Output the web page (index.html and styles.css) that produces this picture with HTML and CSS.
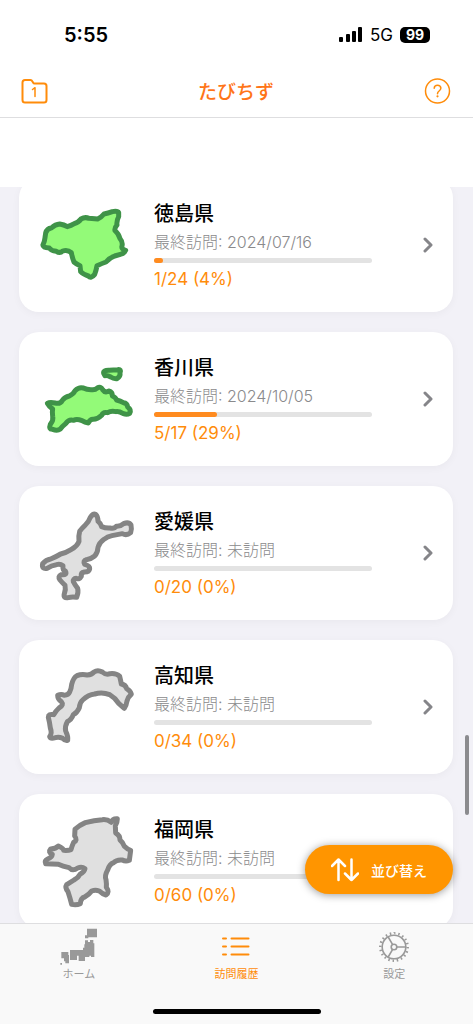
FILE: index.html
```html
<!DOCTYPE html>
<html lang="ja">
<head>
  <meta charset="UTF-8" />
  <meta name="viewport" content="width=device-width, initial-scale=1.0" />
  <title>たびちず</title>
  <link rel="stylesheet" href="styles.css">
</head>
<body>
  <div class="app">
    <div class="status-bar">
      <span class="time">5:55</span>
      <div class="status-icons">
        <svg class="signal" viewBox="0 0 24 16">
          <rect x="0" y="10" width="4" height="5" rx="1" />
          <rect x="7" y="7" width="4" height="8" rx="1" />
          <rect x="13" y="4" width="4" height="11" rx="1" />
          <rect x="19" y="0" width="4" height="15" rx="1" />
        </svg>
        <span class="network">5G</span>
        <span class="battery">99</span>
      </div>
    </div>

    <header class="nav">
      <button class="icon-btn" aria-label="フォルダ 1">
        <svg width="27" height="26" viewBox="0 0 27 26">
          <path d="M4 2h5.500q1.200 0 1.800 1.200l.9 1.600q.4.700 1.300.7H23q2.500 0 2.500 2.500v14q0 2.500-2.500 2.500H4q-2.500 0-2.500-2.500V4.500Q1.500 2 4 2z" />
          <path class="thin" d="M11.500 11.500l2.500-1.800v8.800" />
        </svg>
      </button>
      <h1>たびちず</h1>
      <button class="icon-btn" aria-label="ヘルプ">
        <svg width="27" height="26" viewBox="0 0 27 26">
          <circle class="thin" cx="13.500" cy="13" r="12" />
          <path class="thin" d="M10.200 10.200q.2-3 3.300-3t3.400 2.900q0 1.600-1.800 2.900-1.600 1.200-1.600 2.800" />
          <circle class="dot" cx="13.500" cy="18.300" r="1.100" />
        </svg>
      </button>
    </header>

    <div class="banner"></div>

    <main class="content">
      <ul class="pref-list">
        <li>
          <button class="card">
            <svg class="map visited" viewBox="51 15 300 300">
              <path d="M77 129Q81 115 94 114Q106 103 119 102Q132 104 142 110Q153 107 163 101Q177 96 183 87Q195 80 207 85L233 87Q244 82 252 72Q264 70 277 65Q293 62 296 68V80Q289 93 291 105Q283 113 285 122Q296 131 300 146Q309 156 306 168Q303 177 317 181Q314 190 301 193L284 198Q268 204 258 216Q246 220 231 227Q229 240 224 253Q213 267 205 258Q189 253 182 245L180 227Q169 222 162 216Q157 204 154 188Q143 178 128 183Q120 191 109 184Q93 182 88 174Q67 173 69 164Q74 153 75 143Z" />
            </svg>
            <div class="info">
              <h2>徳島県</h2>
              <p class="date">最終訪問: 2024/07/16</p>
              <div class="bar"><div class="fill" style="width: 4%"></div></div>
              <p class="count">1/24 (4%)</p>
            </div>
            <svg class="chevron" viewBox="0 0 10 16"><path d="M2 2l6 6-6 6" /></svg>
          </button>
        </li>
        <li>
          <button class="card">
            <svg class="map visited" viewBox="51 -3 300 300">
              <path d="M251 70Q249 60 268 61L293 59Q305 57 300 69Q302 79 291 86Q281 87 272 81Q263 76 255 77Z" />
              <path d="M82 160Q90 155 105 159Q121 163 127 151Q134 141 148 138Q161 132 165 122Q177 110 190 114Q200 119 213 119Q225 121 232 114Q242 108 248 119Q256 130 266 123Q278 126 277 138Q287 142 290 150Q301 153 310 158Q322 159 323 171Q335 179 329 190Q321 195 310 191Q296 183 288 185Q272 182 263 188Q249 185 245 196Q233 208 220 208Q211 207 205 219Q195 218 186 212Q170 206 161 211Q146 207 137 221Q127 229 121 237Q112 244 98 238Q85 239 91 223Q101 211 98 199Q96 186 98 177Q88 171 82 160Z" />
            </svg>
            <div class="info">
              <h2>香川県</h2>
              <p class="date">最終訪問: 2024/10/05</p>
              <div class="bar"><div class="fill" style="width: 29%"></div></div>
              <p class="count">5/17 (29%)</p>
            </div>
            <svg class="chevron" viewBox="0 0 10 16"><path d="M2 2l6 6-6 6" /></svg>
          </button>
        </li>
        <li>
          <button class="card">
            <svg class="map" viewBox="51 9 300 300">
              <path d="M211 52Q219 40 227 43Q234 49 234 64Q242 70 245 80Q257 85 270 84Q283 87 289 79Q301 80 311 71Q326 65 333 75Q336 88 332 98Q320 108 307 101L276 107Q262 110 252 118Q238 128 234 142Q233 159 224 168Q212 178 199 179Q188 182 194 193Q210 197 209 206Q208 216 193 216Q182 218 184 229Q178 240 169 235Q158 236 160 245Q165 255 173 265Q176 276 170 292Q155 290 145 293Q129 296 133 281Q138 269 135 256Q125 246 120 240Q112 229 124 224Q143 226 136 213Q127 211 129 197Q121 191 109 194Q94 196 82 205Q64 209 68 191Q78 179 92 177Q109 170 122 162Q139 158 153 149Q172 138 177 124Q175 108 179 94Q188 82 195 76Q206 67 211 52Z" />
            </svg>
            <div class="info">
              <h2>愛媛県</h2>
              <p class="date">最終訪問: 未訪問</p>
              <div class="bar"><div class="fill" style="width: 0%"></div></div>
              <p class="count">0/20 (0%)</p>
            </div>
            <svg class="chevron" viewBox="0 0 10 16"><path d="M2 2l6 6-6 6" /></svg>
          </button>
        </li>
        <li>
          <button class="card">
            <svg class="map" viewBox="51 6 300 300">
              <path d="M113 121Q124 116 133 121Q145 120 149 111Q154 101 155 88Q160 68 171 62Q185 56 202 60Q215 59 222 51Q233 43 247 51Q258 61 270 56Q289 54 299 64Q302 76 304 87Q317 89 320 101Q332 108 334 118Q325 125 321 138Q319 152 313 160Q305 153 296 145Q286 129 269 119Q247 110 224 117Q205 119 188 135Q179 143 178 158Q172 172 160 179Q154 195 142 200Q134 214 137 228Q145 244 143 256Q135 258 128 250Q116 244 106 248Q92 253 89 245Q97 235 91 219Q89 202 85 187Q85 176 101 179Q108 167 117 159Q133 150 124 140Q113 133 113 121Z" />
            </svg>
            <div class="info">
              <h2>高知県</h2>
              <p class="date">最終訪問: 未訪問</p>
              <div class="bar"><div class="fill" style="width: 0%"></div></div>
              <p class="count">0/34 (0%)</p>
            </div>
            <svg class="chevron" viewBox="0 0 10 16"><path d="M2 2l6 6-6 6" /></svg>
          </button>
        </li>
        <li>
          <button class="card">
            <svg class="map" viewBox="51 33 300 300">
              <path d="M165 88Q177 76 196 68Q223 60 247 59Q261 57 274 67Q278 55 292 56Q292 67 286 77L287 99Q300 106 300 120Q309 127 313 139Q322 148 332 151L328 181Q317 186 307 180Q290 178 281 188Q268 193 263 210Q253 227 258 239Q260 252 259 262Q270 277 258 285Q247 282 238 273Q226 269 215 273Q207 284 194 291Q182 294 181 311Q169 316 155 313Q150 293 144 275Q134 263 140 254L162 240Q175 233 180 223Q193 217 195 206Q186 199 173 204Q158 215 147 203Q128 199 115 193L77 191Q72 182 83 177Q96 172 97 163Q83 157 92 147Q108 146 115 138Q130 145 131 151Q145 152 153 149Q156 138 161 127Q174 121 164 108Z" />
            </svg>
            <div class="info">
              <h2>福岡県</h2>
              <p class="date">最終訪問: 未訪問</p>
              <div class="bar"><div class="fill" style="width: 0%"></div></div>
              <p class="count">0/60 (0%)</p>
            </div>
            <svg class="chevron" viewBox="0 0 10 16"><path d="M2 2l6 6-6 6" /></svg>
          </button>
        </li>
      </ul>
      <div class="scroll-thumb"></div>
      <button class="sort-btn">
        <svg width="28" height="24" viewBox="0 0 28 24">
          <path d="M7.500 22V2M1 8l6.500-6.500L14 8M20.500 1.500v20.500M14 15.500l6.500 6.500 6.500-6.500" />
        </svg>
        並び替え
      </button>
    </main>

    <nav class="tab-bar">
      <a class="tab" href="#home">
        <!-- blocky map of Japan -->
        <svg viewBox="180 25 114 114">
          <path class="solid" d="M261 27h30v26h-26v3h-10v-9h6zM255 62h9v5h6v-6h10v10h3v41h-10v-4h-5v4h-13v12h-19v-16h-26V91h39v-7h4V74h2zM210 107h21v14h-21zM184 97h21v9h2v25h-11v-6h-4v-9h-8zM181 130h5v5h-5z" />
        </svg>
        <span>ホーム</span>
      </a>
      <a class="tab active" href="#history">
        <svg viewBox="0 0 38 38">
          <path d="M6 10.500h3M14.500 10.500h17M6 18.500h3M14.500 18.500h17M6 26.500h3M14.500 26.500h17" />
        </svg>
        <span>訪問履歴</span>
      </a>
      <a class="tab" href="#settings">
        <svg class="gear" viewBox="0 0 38 38">
          <circle cx="19" cy="19" r="11.800" />
          <circle class="teeth" cx="19" cy="19" r="13.700" pathLength="40" />
          <circle cx="19" cy="19" r="2.800" />
          <path d="M22 19h8.500M17.500 16.400L13.200 9M17.500 21.600L13.200 29" />
        </svg>
        <span>設定</span>
      </a>
      <div class="home-indicator"></div>
    </nav>
  </div>
</body>
</html>
```

FILE: styles.css
```css
* {
  box-sizing: border-box;
}

body {
  margin: 0;
  font-family: Inter, "Noto Sans CJK JP", sans-serif;
  background-color: #fff;
  color: #000;
}

h1, h2, p, ul {
  margin: 0;
  padding: 0;
}

button {
  padding: 0;
  border: none;
  background: none;
  font-family: inherit;
  cursor: pointer;
}

svg {
  display: block;
  flex-shrink: 0;
}

.app {
  display: flex;
  flex-direction: column;
  height: 100vh;
}

/* status bar */
.status-bar {
  display: flex;
  align-items: center;
  justify-content: space-between;
  height: 64px;
  padding: 6px 43px 0 64px;
}

.time {
  font-size: 20px;
  font-weight: 600;
}

.status-icons {
  display: flex;
  align-items: center;
  gap: 7px;
}

.signal {
  width: 24px;
  height: 16px;
}

.network {
  font-size: 17px;
}

.battery {
  width: 30px;
  border-radius: 5px;
  background-color: #000;
  color: #fff;
  font-size: 14px;
  font-weight: 700;
  line-height: 16px;
  text-align: center;
}

/* header */
.nav {
  display: flex;
  align-items: center;
  justify-content: space-between;
  height: 54px;
  padding: 0 22px 0 21px;
  border-bottom: 1px solid #dedee0;
}

.nav h1 {
  color: #ff7518;
  font-size: 19px;
  font-weight: 500;
}

.icon-btn svg {
  fill: none;
  stroke: #ff8c0a;
  stroke-width: 2;
  stroke-linecap: round;
  stroke-linejoin: round;
}

.icon-btn .thin {
  stroke-width: 1.5;
}

.icon-btn .dot {
  fill: #ff8c0a;
  stroke: none;
}

.banner {
  height: 69px;
  flex-shrink: 0;
}

/* list */
.content {
  position: relative;
  flex: 1;
  min-height: 0;
  overflow: hidden;
  background-color: #f2f1f7;
}

.pref-list {
  display: flex;
  flex-direction: column;
  gap: 20px;
  margin-top: -9px;
  padding: 0 20px 0 19px;
  list-style: none;
}

.card {
  display: flex;
  align-items: center;
  width: 100%;
  height: 134px;
  padding: 0 20px 0 18px;
  border-radius: 20px;
  background-color: #fff;
  box-shadow: 0 2px 8px rgba(0, 0, 0, 0.04);
  color: #000;
  text-align: left;
}

.map {
  width: 100px;
  height: 100px;
  margin-right: 17px;
  fill: #e0e0e0;
  stroke: #848484;
  stroke-width: 15;
  stroke-linejoin: round;
}

.map.visited {
  fill: #93fa78;
  stroke: #3f9348;
}

.info {
  flex: 1;
  margin-right: 51px;
}

.info h2 {
  font-size: 20px;
  font-weight: 500;
  line-height: 26px;
}

.date {
  margin-top: 5px;
  color: #8a8a8c;
  font-size: 16px;
  font-weight: 300;
  line-height: 20px;
}

.bar {
  height: 5px;
  margin: 6px 0;
  border-radius: 3px;
  background-color: #e3e3e3;
}

.fill {
  height: 100%;
  border-radius: 3px;
  background-color: #ff8b1f;
}

.count {
  color: #ff8c0a;
  font-size: 17px;
  line-height: 20px;
}

.chevron {
  width: 10px;
  height: 16px;
  fill: none;
  stroke: #858589;
  stroke-width: 3;
  stroke-linecap: round;
  stroke-linejoin: round;
}

.scroll-thumb {
  position: absolute;
  right: 4px;
  bottom: 108px;
  width: 4px;
  height: 80px;
  border-radius: 2px;
  background-color: #8b8b8e;
}

.sort-btn {
  position: absolute;
  right: 20px;
  bottom: 29px;
  display: flex;
  align-items: center;
  gap: 12px;
  height: 49px;
  padding: 0 26px;
  border-radius: 25px;
  background-color: #ff9500;
  box-shadow: 0 1px 8px rgba(0, 0, 0, 0.4);
  color: #fff;
  font-size: 14px;
  font-weight: 500;
}

.sort-btn svg {
  fill: none;
  stroke: #fff;
  stroke-width: 2.5;
  stroke-linecap: round;
  stroke-linejoin: round;
}

/* bottom tabs */
.tab-bar {
  display: grid;
  grid-template-columns: repeat(3, 1fr);
  padding: 4px 0 10px;
  border-top: 1px solid #dedee0;
  background-color: #f9f9f9;
}

.tab {
  display: flex;
  flex-direction: column;
  align-items: center;
  color: #999;
  font-size: 11px;
  line-height: 16px;
  text-decoration: none;
}

.tab.active {
  color: #ff8c0a;
}

.tab svg {
  width: 38px;
  height: 38px;
  fill: none;
  stroke: currentColor;
  stroke-width: 2;
  stroke-linecap: round;
}

.tab .solid {
  fill: currentColor;
  stroke: none;
}

.tab .gear {
  stroke-width: 1.6;
}

/* 20 teeth around the gear */
.tab .teeth {
  stroke-width: 2.5;
  stroke-linecap: butt;
  stroke-dasharray: 0.7 1.3;
}

.home-indicator {
  grid-column: 1 / -1;
  justify-self: center;
  width: 168px;
  height: 5px;
  margin-top: 27px;
  border-radius: 3px;
  background-color: #000;
}
```
